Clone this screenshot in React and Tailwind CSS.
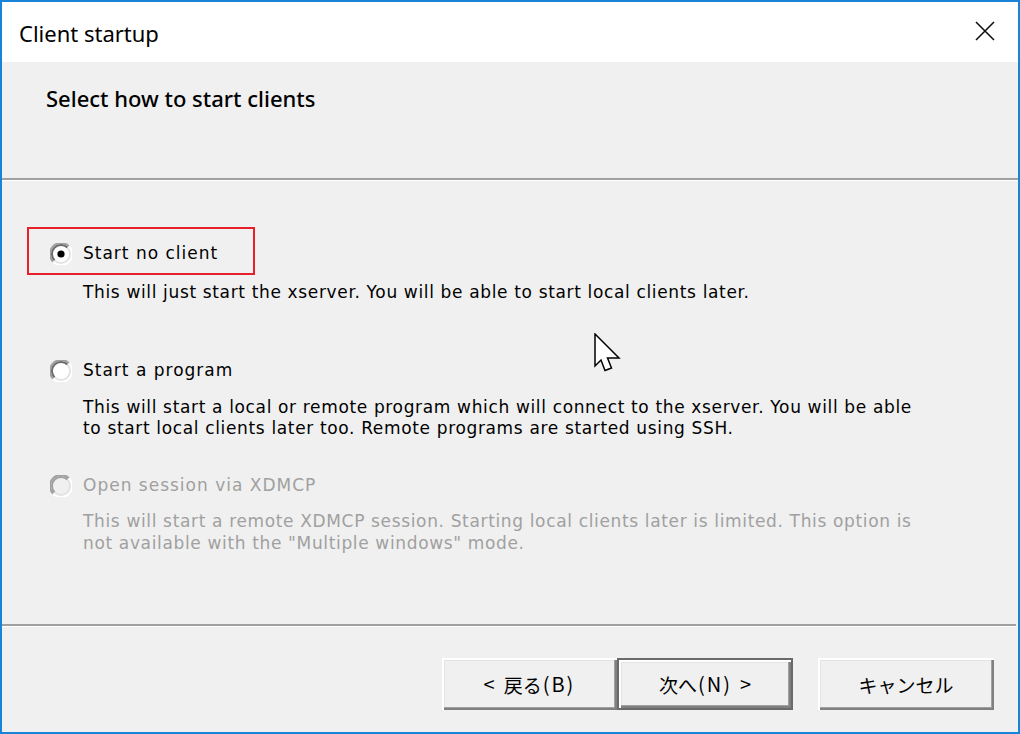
import React from "react";

function Radio({ checked = false, disabled = false }) {
  return (
    <svg width="22" height="22" viewBox="0 0 22 22" className="shrink-0">
      <circle cx="11" cy="11" r="10" fill={disabled ? "#f0f0f0" : "#ffffff"} />
      <path d="M3.2 18.8 A10 10 0 0 1 18.8 3.2" fill="none" stroke="#a0a0a0" strokeWidth="2" />
      <path d="M4.6 17.4 A8 8 0 0 1 17.4 4.6" fill="none" stroke={disabled ? "#a0a0a0" : "#696969"} strokeWidth="2" />
      <path d="M18.8 3.2 A10 10 0 0 1 3.2 18.8" fill="none" stroke="#ffffff" strokeWidth="2" />
      <path d="M17.4 4.6 A8 8 0 0 1 4.6 17.4" fill="none" stroke="#e3e3e3" strokeWidth="2" />
      {checked && <circle cx="11" cy="11" r="3.6" fill="#000000" />}
    </svg>
  );
}

function Button({ children, isDefault = false, className = "" }) {
  const inner = (
    <div className="h-full w-full flex items-center justify-center bg-[#f0f0f0] shadow-[inset_2px_2px_0_#ffffff,inset_-2px_-2px_0_#808080,inset_-3px_-3px_0_#a0a0a0,inset_3px_3px_0_#e3e3e3]">
      <span className="flex items-center text-[19px] text-black leading-none [font-family:'Noto_Sans_CJK_JP',sans-serif]">{children}</span>
    </div>
  );
  if (isDefault) {
    return (
      <div className={"h-[52px] border-2 border-[#6a6a6a] " + className}>{inner}</div>
    );
  }
  return <div className={"h-[52px] " + className}>{inner}</div>;
}

export default function App() {
  const label = "[font-family:'DejaVu_Sans',sans-serif] text-[17px] tracking-[1px]";
  const desc = "[font-family:'DejaVu_Sans',sans-serif] text-[17px] tracking-[0.65px]";
  return (
    <div className="w-[1020px] h-[734px] border-2 border-[#1883d7] bg-[#f0f0f0] flex flex-col relative overflow-hidden">
      {/* Title bar */}
      <div className="h-[60px] bg-white flex items-center justify-between pl-[17px] pr-[23px] shrink-0">
        <span className="text-[22px] text-black [font-family:'Noto_Sans',sans-serif] pt-[3px]">Client startup</span>
        <svg width="20" height="20" viewBox="0 0 20 20" className="mt-[-2px]">
          <path d="M1 1 L19 19 M19 1 L1 19" stroke="#111111" strokeWidth="1.6" />
        </svg>
      </div>

      {/* Header */}
      <div className="h-[116px] shrink-0 pl-[44px] pt-[20px]">
        <span className="text-[22px] font-medium text-black [font-family:'Noto_Sans',sans-serif]">Select how to start clients</span>
      </div>
      <div className="h-[2px] bg-[#a0a0a0] shrink-0" />
      <div className="h-px bg-white shrink-0" />

      {/* Body */}
      <div className="flex-1 pl-[25px] pt-[46px]">
        {/* Option 1 */}
        <div className="w-[228px] h-[48px] border-2 border-[#e8202a] flex items-center pl-[21px] pt-[6px]">
          <Radio checked />
          <span className={"ml-[11px] text-black " + label}>Start no client</span>
        </div>
        <div className={"pl-[56px] mt-[6px] leading-[22px] text-black " + desc}>
          This will just start the xserver. You will be able to start local clients later.
        </div>

        {/* Option 2 */}
        <div className="mt-[44px] w-[260px] h-[48px] border-2 border-transparent flex items-center pl-[21px]">
          <Radio />
          <span className={"ml-[11px] text-black " + label}>Start a program</span>
        </div>
        <div className={"pl-[56px] mt-[2px] leading-[21px] text-black " + desc}>
          <div>This will start a local or remote program which will connect to the xserver. You will be able</div>
          <div>to start local clients later too. Remote programs are started using SSH.</div>
        </div>

        {/* Option 3 */}
        <div className="mt-[23px] w-[330px] h-[48px] border-2 border-transparent flex items-center pl-[21px]">
          <Radio disabled />
          <span className={"ml-[11px] text-[#a0a0a0] " + label}>Open session via XDMCP</span>
        </div>
        <div className={"pl-[56px] leading-[22px] text-[#a0a0a0] " + desc}>
          <div>This will start a remote XDMCP session. Starting local clients later is limited. This option is</div>
          <div>not available with the "Multiple windows" mode.</div>
        </div>
      </div>

      <div className="h-[2px] bg-[#a0a0a0] shrink-0 mr-[2px]" />
      <div className="h-px bg-white shrink-0 mr-[2px]" />

      {/* Footer */}
      <div className="h-[105px] shrink-0 flex justify-end items-start pt-[31px] pr-[24px]">
        <Button className="w-[175px]">
          <span className="text-[20px]">&lt;</span>
          <span className="ml-[9px]">戻る</span>
          <span className="tracking-[2px] text-[20px] ml-[1px]">(B)</span>
        </Button>
        <Button isDefault className="w-[176px]">
          <span>次へ</span>
          <span className="tracking-[2px] text-[20px] ml-[1px]">(N)</span>
          <span className="text-[20px] ml-[8px]">&gt;</span>
        </Button>
        <Button className="w-[176px] ml-[25px]">キャンセル</Button>
      </div>

      {/* Mouse cursor overlay */}
      <svg className="absolute left-[592px] top-[331px]" width="28" height="40" viewBox="0 0 28 40">
        <path d="M1 1 L1 33 L7 27 L11 37.5 L17.5 35 L13.5 25 L25 25 Z" fill="#ffffff" stroke="#000000" strokeWidth="1.5" strokeLinejoin="miter" />
      </svg>
    </div>
  );
}
